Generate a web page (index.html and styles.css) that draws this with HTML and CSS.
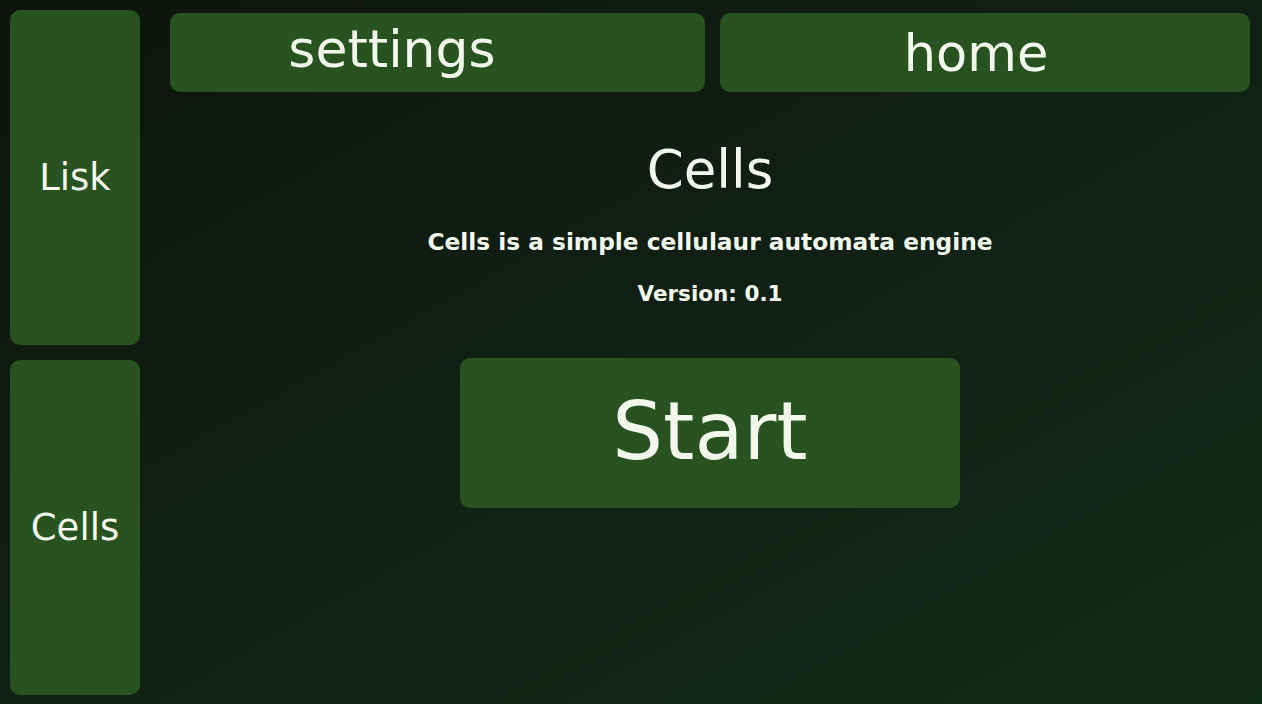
FILE: index.html
```html
<!DOCTYPE html>
<html lang="en">
<head>
<meta charset="utf-8">
<title>Cells</title>
<link rel="stylesheet" href="styles.css">
</head>
<body>
<div class="app">
  <aside class="sidebar">
    <div class="side-btn">Lisk</div>
    <div class="side-btn">Cells</div>
  </aside>
  <main class="main">
    <nav class="nav">
      <div class="nav-btn nav-settings">settings</div>
      <div class="nav-btn nav-home">home</div>
    </nav>
    <section class="intro">
      <h1 class="title">Cells</h1>
      <p class="desc">Cells is a simple cellulaur automata engine</p>
      <p class="version">Version: 0.1</p>
      <div class="start">Start</div>
    </section>
  </main>
</div>
</body>
</html>
```
FILE: styles.css
```css
html, body {
  margin: 0;
  padding: 0;
}
body {
  width: 1262px;
  height: 704px;
  overflow: hidden;
  background: linear-gradient(to bottom right, #0e140d, #122c1b);
  font-family: "DejaVu Sans", "Noto Sans", sans-serif;
  color: #f3f8ec;
}
.app {
  display: flex;
  box-sizing: border-box;
  height: 704px;
  padding: 10px 12px 9px 10px;
  gap: 30px;
}
.sidebar {
  width: 130px;
  display: flex;
  flex-direction: column;
  gap: 15px;
}
.side-btn {
  flex: 1;
  background: #28521f;
  border-radius: 10px;
  display: flex;
  align-items: center;
  justify-content: center;
  font-size: 37px;
}
.main {
  flex: 1;
  display: flex;
  flex-direction: column;
}
.nav {
  display: grid;
  grid-template-columns: 535px 1fr;
  gap: 15px;
  margin-top: 3px;
  height: 79px;
}
.nav-btn {
  background: #28521f;
  border-radius: 10px;
  display: flex;
  align-items: center;
  justify-content: center;
  font-size: 51px;
}
.nav-settings {
  font-size: 52px;
  padding-right: 91px;
  padding-bottom: 8px;
}
.nav-home {
  padding-right: 18px;
  padding-top: 2px;
}
.intro {
  display: flex;
  flex-direction: column;
  align-items: center;
}
.title {
  margin: 48px 0 0;
  font-size: 53px;
  font-weight: normal;
  line-height: 60px;
}
.desc {
  margin: 27px 0 0;
  font-size: 23.3px;
  font-weight: bold;
  line-height: 30px;
}
.version {
  margin: 22px 0 0;
  font-size: 21.5px;
  font-weight: bold;
  line-height: 30px;
}
.start {
  margin-top: 49px;
  width: 500px;
  height: 150px;
  background: #28521f;
  border-radius: 10px;
  display: flex;
  align-items: center;
  justify-content: center;
  font-size: 80px;
  padding-bottom: 4px;
  box-sizing: border-box;
}
```
